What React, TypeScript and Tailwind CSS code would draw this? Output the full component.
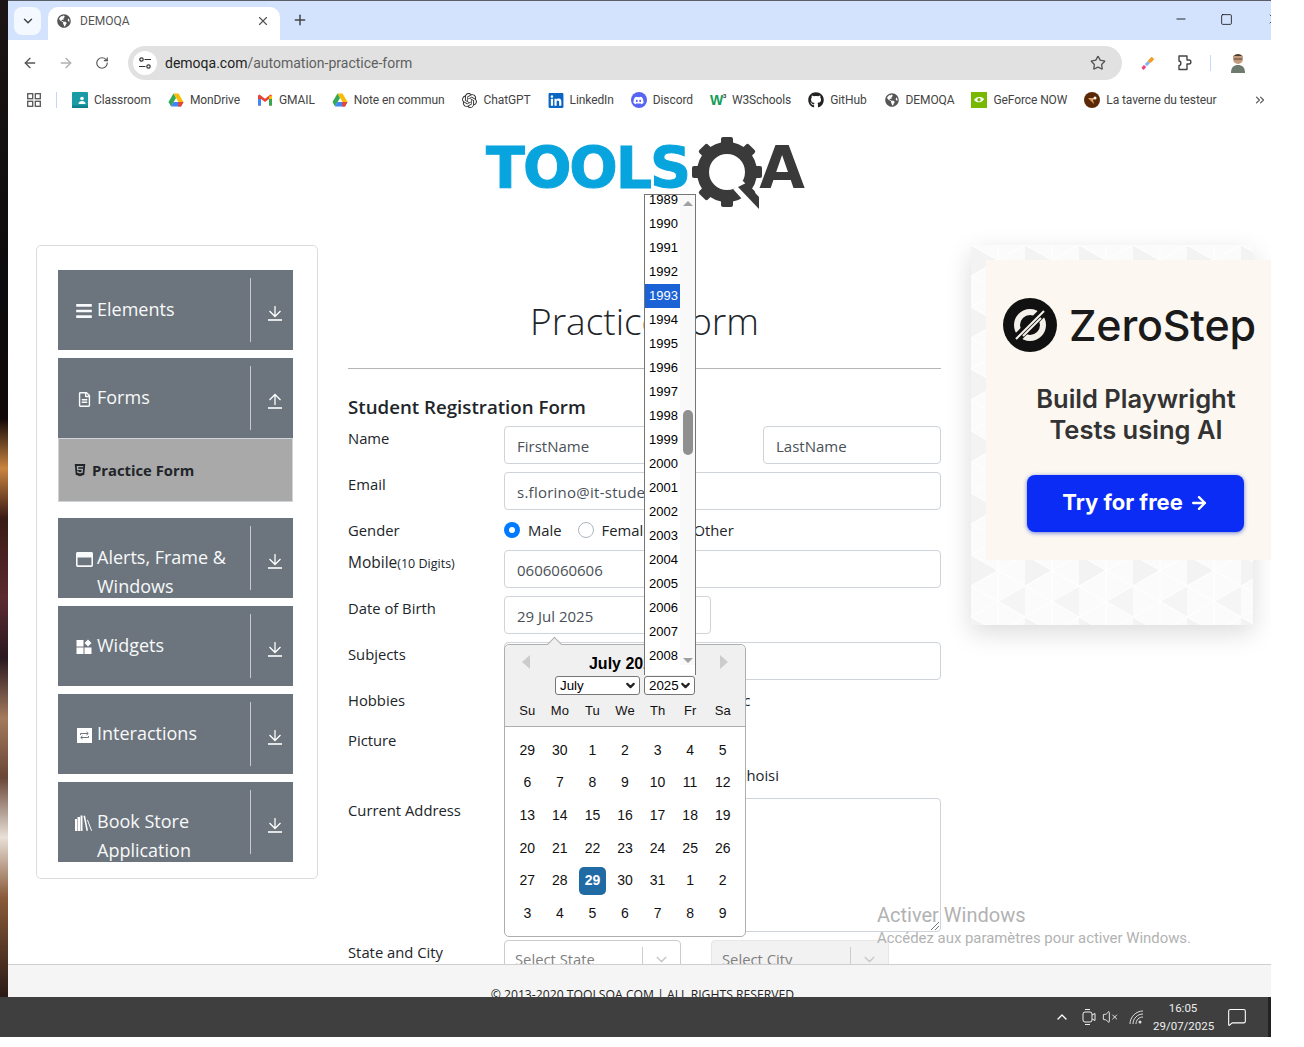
import React from "react";
import { ArrowLeft, ArrowRight, RotateCw, Star, ChevronDown, ChevronUp, X, Plus, Minus, Square, ChevronsRight, VolumeX, MessageSquare, ArrowRight as Arr } from "lucide-react";
import { FaGlobeAmericas, FaGithub, FaLinkedin, FaDiscord, FaHtml5, FaBars, FaRegWindowMaximize, FaRegFileAlt } from "react-icons/fa";
import { SiOpenai } from "react-icons/si";

const Drive = () => (
  <svg width="16" height="16" viewBox="0 0 16 16">
    <polygon points="5.5,1.5 10.5,1.5 15.5,10 10.5,10" fill="#fbbc04" />
    <polygon points="5.5,1.5 8,6 3,14.5 0.5,10" fill="#34a853" />
    <polygon points="5.5,10 15.5,10 13,14.5 3,14.5" fill="#4285f4" />
    <polygon points="10.5,10 15.5,10 13,14.5 10,14.5" fill="#ea4335" />
  </svg>
);
const Gmail = () => (
  <svg width="16" height="16" viewBox="0 0 16 16">
    <path d="M1 3.5V13.5H4V7L8 10L12 7V13.5H15V3.5L13.5 2.5L8 6.8L2.5 2.5Z" fill="#ea4335" />
    <rect x="1" y="7" width="3" height="6.5" fill="#4285f4" />
    <rect x="12" y="7" width="3" height="6.5" fill="#34a853" />
    <polygon points="12,4.5 15,3.5 15,7 12,7" fill="#fbbc04" />
  </svg>
);
const Classroom = () => (
  <svg width="16" height="16" viewBox="0 0 16 16">
    <rect width="16" height="16" rx="1" fill="#1a9aa5" />
    <circle cx="10" cy="6.5" r="1.8" fill="#fff" />
    <path d="M6.5 12c0-2 1.5-3 3.5-3s3.5 1 3.5 3z" fill="#fff" />
    <rect y="13.5" width="16" height="2.5" fill="#0f7f8a" />
  </svg>
);
const Geforce = () => (
  <svg width="16" height="16" viewBox="0 0 16 16">
    <rect width="16" height="16" fill="#76b900" />
    <path d="M3 8c2-3.5 7-4 10-1-2 4-7 4.500-10 1z" fill="#fff" />
    <circle cx="8" cy="7.800" r="1.700" fill="#76b900" />
  </svg>
);
const Taverne = () => (
  <svg width="16" height="16" viewBox="0 0 16 16">
    <circle cx="8" cy="8" r="8" fill="#5a2a08" />
    <path d="M4 6h8l-3 2 1 4-3-3z" fill="#e0a060" />
    <circle cx="11" cy="6" r="1.500" fill="#fff" />
  </svg>
);

const bookmarks: { n: string; i: React.ReactNode }[] = [
  { n: "Classroom", i: <Classroom /> },
  { n: "MonDrive", i: <Drive /> },
  { n: "GMAIL", i: <Gmail /> },
  { n: "Note en commun", i: <Drive /> },
  { n: "ChatGPT", i: <SiOpenai size={15} className="text-[#333]" /> },
  { n: "LinkedIn", i: <FaLinkedin size={17} className="text-[#0a66c2]" /> },
  { n: "Discord", i: <span className="w-4 h-4 rounded-full bg-[#5865f2] flex items-center justify-center"><FaDiscord size={11} className="text-white" /></span> },
  { n: "W3Schools", i: <span className="w-4 text-[14px] leading-none font-bold text-[#0f9d58] flex font-['Liberation_Sans',sans-serif]">W<span className="text-[6px] text-[#333]">3</span></span> },
  { n: "GitHub", i: <FaGithub size={16} className="text-[#222]" /> },
  { n: "DEMOQA", i: <FaGlobeAmericas size={14} className="text-[#555] mx-px" /> },
  { n: "GeForce NOW", i: <Geforce /> },
  { n: "La taverne du testeur", i: <Taverne /> },
];

const Arrow = ({ up }: { up?: boolean }) => (
  <svg width="16" height="16" viewBox="0 0 16 16" fill="none" stroke="#fff" strokeWidth="1.300">
    {up ? (
      <>
        <path d="M8 12V1.500M2.500 7L8 1.500L13.500 7" />
        <path d="M1 15H15" strokeWidth="1.600" />
      </>
    ) : (
      <>
        <path d="M8 1V11.500M2.500 6L8 11.500L13.500 6" />
        <path d="M1 15H15" strokeWidth="1.600" />
      </>
    )}
  </svg>
);

const WidgetIcon = () => (
  <svg width="16" height="16" viewBox="0 0 16 16" fill="#fff">
    <rect x="0.500" y="1" width="7" height="6.500" />
    <rect x="0.500" y="8.500" width="7" height="6.500" />
    <rect x="8.500" y="8.500" width="7" height="6.500" />
    <polygon points="12,0.500 15.500,4 12,7.500 8.500,4" />
  </svg>
);
const InteractIcon = () => (
  <svg width="15" height="15" viewBox="0 0 15 15">
    <rect width="15" height="15" fill="#fff" />
    <path d="M3.500 7V5.500H11M9.500 4L11.300 5.500L9.500 7M11.500 8V9.500H4M5.500 8L3.700 9.500L5.500 11" fill="none" stroke="#6c757d" strokeWidth="1" />
  </svg>
);
const BooksIcon = () => (
  <svg width="18" height="16" viewBox="0 0 18 16" fill="#fff">
    <rect x="0" y="4" width="2" height="12" />
    <rect x="2.500" y="2" width="2.500" height="14" />
    <rect x="5.500" y="0.500" width="2" height="15.500" />
    <polygon points="8.500,1 10,0.500 13,15.500 11.500,16" />
    <polygon points="12,5 12.800,4.800 17,15.500 16.200,16" />
  </svg>
);

const nav: { t: React.ReactNode; i: React.ReactNode; up?: boolean }[] = [
  { t: "Elements", i: <FaBars size={18} /> },
  { t: "Forms", i: <FaRegFileAlt size={15} />, up: true },
  { t: <>Alerts, Frame &amp; Windows</>, i: <FaRegWindowMaximize size={17} /> },
  { t: "Widgets", i: <WidgetIcon /> },
  { t: "Interactions", i: <InteractIcon /> },
  { t: <>Book Store Application</>, i: <BooksIcon /> },
];

const NavItem = ({ t, i, up }: { t: React.ReactNode; i: React.ReactNode; up?: boolean }) => (
  <div className="h-[80px] bg-[#6c757d] flex text-[#f8f9fa] overflow-hidden">
    <div className="w-[192px] flex items-start pl-[17px] pt-[25px] shrink-0">
      <span className="w-[18px] h-[30px] flex items-center justify-center shrink-0 mt-[1px]">{i}</span>
      <span className="text-[18px] leading-[29px] ml-[4px] w-[150px]">{t}</span>
    </div>
    <div className="flex-1 my-2 border-l border-[#c5c9cd] flex items-center justify-center pt-[5px] pl-[6px]">
      <Arrow up={up} />
    </div>
  </div>
);

const Field = ({ label, children, h }: { label: React.ReactNode; children?: React.ReactNode; h: string }) => (
  <div className={`flex mb-2 ${h}`}>
    <div className="w-[156px] shrink-0 leading-[24px] text-[#212529]">{label}</div>
    <div className="flex-1 min-w-0">{children}</div>
  </div>
);
const inputCls = "h-[38px] border border-[#ced4da] rounded-[4px] px-3 leading-[38px] text-[15px] text-[#495057] bg-white";

const years = Array.from({ length: 21 }, (_, k) => 1989 + k);
const weeks = [
  [29, 30, 1, 2, 3, 4, 5],
  [6, 7, 8, 9, 10, 11, 12],
  [13, 14, 15, 16, 17, 18, 19],
  [20, 21, 22, 23, 24, 25, 26],
  [27, 28, 29, 30, 31, 1, 2],
  [3, 4, 5, 6, 7, 8, 9],
];
const SelectChev = () => <ChevronDown size={13} strokeWidth={4} className="text-[#222]" />;

export default function App() {
  return (
    <div className="relative w-[1304px] h-[1047px] bg-white overflow-hidden font-['Open_Sans',sans-serif] text-[14.8px]">
      <div className="flex h-[997px] w-[1271px]">
        <div className="w-2 shrink-0 bg-[linear-gradient(180deg,#1c1414_0%,#0b0a0c_30%,#120808_42%,#c9843f_47%,#3a1a16_52%,#5c2a30_60%,#2a1820_66%,#a37a5c_72%,#6a4636_78%,#e8e0d8_84%,#8a5a3a_90%,#2a1a14_100%)]" />
        <div className="w-[1263px] flex flex-col overflow-hidden">
          {/* tab strip */}
          <div className="h-[40px] shrink-0 bg-[#d3e3fd] border-t border-[#5a5e66] flex items-end font-['Roboto',sans-serif]">
            <div className="ml-[6px] mb-[5px] w-[27px] h-[28px] rounded-lg bg-[#f4f8ff] flex items-center justify-center text-[#444]">
              <ChevronDown size={14} strokeWidth={2.500} />
            </div>
            <div className="ml-[7px] w-[232px] h-[33px] rounded-t-[10px] bg-white flex items-center pl-[9px] pr-[10px] pb-[6px] text-[12px] text-[#555]">
              <FaGlobeAmericas size={14} className="text-[#555]" />
              <span className="ml-[9px] flex-1">DEMOQA</span>
              <X size={14} className="text-[#555]" />
            </div>
            <div className="ml-[12px] mb-[12px] text-[#444]">
              <Plus size={16} strokeWidth={2.200} />
            </div>
            <div className="ml-auto flex items-center mb-[13px] text-[#111]">
              <Minus size={14} strokeWidth={1.500} />
              <Square size={13} strokeWidth={1.500} className="ml-[32px]" />
              <X size={16} strokeWidth={1} className="ml-[33px] -mr-[11px]" />
            </div>
          </div>
          {/* toolbar */}
          <div className="h-[44px] shrink-0 pt-[2px] bg-white flex items-center font-['Roboto',sans-serif]">
            <ArrowLeft size={16} className="ml-[14px] text-[#555]" />
            <ArrowRight size={16} className="ml-[20px] text-[#b0b0b0]" />
            <RotateCw size={14} className="ml-[21px] text-[#555]" />
            <div className="ml-[19px] w-[994px] h-[34px] rounded-full bg-[#e1e1e1] flex items-center pl-[5px] pr-[16px]">
              <span className="w-[24px] h-[24px] rounded-full bg-white flex items-center justify-center">
                <svg width="14" height="14" viewBox="0 0 14 14" fill="none" stroke="#333" strokeWidth="1.200">
                  <circle cx="3.500" cy="3.500" r="1.700" />
                  <path d="M6.500 3.500H13M1 10.500H7.500" />
                  <circle cx="10.500" cy="10.500" r="1.700" />
                </svg>
              </span>
              <span className="ml-[8px] text-[14px] text-[#222] flex-1">
                demoqa.com<span className="text-[#5f5f5f]">/automation-practice-form</span>
              </span>
              <Star size={16} className="text-[#555]" />
            </div>
            <svg width="16" height="16" viewBox="0 0 16 16" className="ml-[18px]">
              <path d="M4 12L7 9" stroke="#e8f0ff" strokeWidth="3" />
              <path d="M2.500 14L5 11" stroke="#f5417a" strokeWidth="3" />
              <path d="M6 10L9 7" stroke="#7fb3f5" strokeWidth="3" />
              <path d="M9 7L13 3" stroke="#f59a23" strokeWidth="3.500" />
            </svg>
            <svg width="18" height="18" viewBox="0 0 18 18" fill="none" stroke="#444" strokeWidth="1.400" strokeLinejoin="round" className="ml-[20px]">
              <path d="M3 2H11V6H13C15.500 6 15.500 10 13 10H11V15.500H3V11.500C5.500 11.500 5.500 7 3 7Z" />
            </svg>
            <div className="ml-[16px] w-px h-[16px] bg-[#c5d8f5]" />
            <svg width="18" height="24" viewBox="0 0 18 24" className="ml-[18px]">
              <circle cx="9" cy="8" r="5" fill="#c49a7a" />
              <path d="M4 7c0-5 10-5 10 0l-1-2H5z" fill="#4a3a2a" />
              <path d="M5 8H13" stroke="#333" strokeWidth="0.800" />
              <path d="M2 22c0-6 3-8 7-8s7 2 7 8z" fill="#6e7a6e" />
            </svg>
          </div>
          {/* bookmarks */}
          <div className="h-[36px] shrink-0 pb-[4px] bg-white flex items-center font-['Roboto',sans-serif] text-[12px] tracking-[-0.1px] text-[#444] relative">
            <svg width="14" height="14" viewBox="0 0 14 14" fill="none" stroke="#555" strokeWidth="1.300" className="ml-[19px]">
              <rect x="0.700" y="0.700" width="5" height="5" />
              <rect x="8.300" y="0.700" width="5" height="5" />
              <rect x="0.700" y="8.300" width="5" height="5" />
              <rect x="8.300" y="8.300" width="5" height="5" />
            </svg>
            <div className="ml-[15px] w-px h-[16px] bg-[#c5d8f5]" />
            <div className="ml-[15px] flex items-center gap-[17px] whitespace-nowrap">
              {bookmarks.map((b) => (
                <div key={b.n} className="flex items-center gap-[6px]">
                  <span className="w-4 h-4 flex items-center justify-center">{b.i}</span>
                  <span>{b.n}</span>
                </div>
              ))}
            </div>
            <ChevronsRight size={14} className="ml-auto mr-[4px] text-[#555]" />
          </div>
          {/* page */}
          <div className="flex-1 min-h-0 overflow-hidden bg-white">
            <div className="h-[125px] flex items-start pl-[478px]">
              <span className="mt-[16px] text-[57px] leading-[64px] font-bold font-['DejaVu_Sans',sans-serif] text-[#08a4de] tracking-[-2px] [-webkit-text-stroke:1px_#08a4de]">TOOLS</span>
              <svg width="70" height="74" viewBox="0 0 70 74" className="mt-[17px] ml-[3px]">
                <g fill="#3a3a3a">
                  {[0, 45, 90, 135, 180, 225, 270, 315].map((a) => (
                    <rect key={a} x="29" y="0" width="12" height="12" rx="2" transform={`rotate(${a} 35 35)`} />
                  ))}
                </g>
                <circle cx="35" cy="35" r="24" fill="none" stroke="#3a3a3a" strokeWidth="12" />
                <path d="M46 48L65 69" stroke="#fff" strokeWidth="13" />
                <path d="M46 50L67 72V60L54 46z" fill="#3a3a3a" />
              </svg>
              <span className="mt-[16px] -ml-[3px] text-[59px] leading-[64px] font-bold font-['DejaVu_Sans',sans-serif] text-[#3a3a3a]">A</span>
            </div>
            <div className="flex pl-[28px]">
              {/* sidebar */}
              <div className="w-[282px] h-[634px] shrink-0 border border-[#dcdcdc] rounded-[5px] pt-[24px] pl-[21px] pr-[24px]">
                <div className="flex flex-col gap-2">
                  <NavItem {...nav[0]} />
                  <div>
                    <NavItem {...nav[1]} />
                    <div className="h-[64px] bg-[#a9a9a9] border border-[#ced4da] flex items-center pl-[14px] text-[#212529] font-bold text-[14.8px]">
                      <FaHtml5 size={14} className="text-[#212529]" />
                      <span className="ml-[5px]">Practice Form</span>
                    </div>
                    <div className="h-[8px]" />
                  </div>
                  <NavItem {...nav[2]} />
                  <NavItem {...nav[3]} />
                  <NavItem {...nav[4]} />
                  <NavItem {...nav[5]} />
                </div>
              </div>
              {/* center */}
              <div className="ml-[30px] w-[593px] shrink-0 text-[#212529]">
                <h1 className="mt-[50px] h-[52px] leading-[52px] text-center text-[37px] font-light">Practice Form</h1>
                <div className="mt-[21px] h-px bg-[#b5b5b5]" />
                <h5 className="mt-[23px] h-[30px] leading-[30px] text-[18.7px] font-semibold mb-[4px]">Student Registration Form</h5>
                <Field label="Name" h="h-[38px]">
                  <div className="flex justify-between">
                    <div className={`${inputCls} w-[178px]`}>FirstName</div>
                    <div className={`${inputCls} w-[178px]`}>LastName</div>
                  </div>
                </Field>
                <Field label="Email" h="h-[38px]">
                  <div className={`${inputCls} tracking-[0.25px]`}>s.florino@it-students.fr</div>
                </Field>
                <Field label="Gender" h="h-[24px]">
                  <div className="flex items-center h-[24px]">
                    <span className="w-4 h-4 rounded-full bg-[#007bff] flex items-center justify-center"><span className="w-[6px] h-[6px] rounded-full bg-white" /></span>
                    <span className="ml-2">Male</span>
                    <span className="ml-[16px] w-4 h-4 rounded-full border border-[#adb5bd] bg-white" />
                    <span className="ml-2">Female</span>
                    <span className="ml-[42px]">Other</span>
                  </div>
                </Field>
                <Field label={<><span className="text-[15.5px]">Mobile</span><span className="text-[12.500px]">(10 Digits)</span></>} h="h-[38px]">
                  <div className={inputCls}>0606060606</div>
                </Field>
                <Field label="Date of Birth" h="h-[38px]">
                  <div className={`${inputCls} w-[207px]`}>29 Jul 2025</div>
                </Field>
                <Field label="Subjects" h="h-[38px]">
                  <div className={inputCls} />
                </Field>
                <Field label="Hobbies" h="h-[32px]">
                  <div className="pl-[206px] leading-[24px]">Music</div>
                </Field>
                <Field label="Picture" h="h-[62px]">
                  <div className="pl-[141px] pt-[35px] leading-[24px]">Aucun fichier choisi</div>
                </Field>
                <Field label="Current Address" h="h-[134px]">
                  <div className="relative h-[134px] border border-[#ced4da] rounded-[4px]">
                    <svg width="10" height="10" viewBox="0 0 10 10" className="absolute right-0 bottom-0" stroke="#777" strokeWidth="1">
                      <path d="M1 9L9 1M5 9L9 5" />
                    </svg>
                  </div>
                </Field>
                <Field label="State and City" h="h-[38px]">
                  <div className="flex gap-[30px] text-[#808080]">
                    <div className="w-[177px] h-[38px] border border-[#ccc] rounded-[4px] flex items-center pl-[10px]">
                      <span className="flex-1">Select State</span>
                      <span className="w-px h-[24px] bg-[#ccc]" />
                      <ChevronDown size={17} strokeWidth={2} className="mx-[10px] text-[#ccc]" />
                    </div>
                    <div className="w-[178px] h-[38px] border border-[#e6e6e6] bg-[#f2f2f2] rounded-[4px] flex items-center pl-[10px]">
                      <span className="flex-1">Select City</span>
                      <span className="w-px h-[24px] bg-[#ccc]" />
                      <ChevronDown size={17} strokeWidth={2} className="mx-[10px] text-[#ccc]" />
                    </div>
                  </div>
                </Field>
              </div>
              {/* ad */}
              <div className="ml-[30px] w-[282px] h-[380px] shrink-0 relative bg-[#fbfbfb] shadow-[0_8px_24px_rgba(0,0,0,0.14)]">
                <svg width="282" height="380" className="absolute inset-0">
                  <defs>
                    <pattern id="tri" width="54" height="62" patternUnits="userSpaceOnUse">
                      <polygon points="0,0 27,15 0,31" fill="#f3f3f3" />
                      <polygon points="54,31 27,46 54,62" fill="#f5f5f5" />
                      <path d="M0 0L54 31M54 0L0 31M0 31L54 62M54 31L0 62M27 0V62" stroke="#fff" strokeWidth="1" fill="none" />
                    </pattern>
                  </defs>
                  <rect width="282" height="380" fill="url(#tri)" />
                </svg>
                <div className="relative top-[15px] ml-[15px] w-[285px] h-[300px] bg-[#fcf7f1] font-['Inter',sans-serif] text-[#222]">
                  <div className="flex items-center pt-[38px] pl-[17px]">
                    <svg width="54" height="54" viewBox="0 0 54 54">
                      <circle cx="27" cy="27" r="27" fill="#111" />
                      <circle cx="27" cy="27" r="13" fill="none" stroke="#f4f0ea" strokeWidth="6" />
                      <path d="M12 42L42 12" stroke="#111" strokeWidth="9" />
                      <path d="M13 41L41 13M20 38L38 20" stroke="#f4f0ea" strokeWidth="2" />
                    </svg>
                    <span className="ml-[12px] text-[43px] leading-[54px] font-medium text-[#1a1a1a] tracking-[-0.200px]">ZeroStep</span>
                  </div>
                  <div className="mt-[31px] text-center text-[25.500px] leading-[31px] font-semibold text-[#333] pl-[15px]">
                    Build Playwright
                    <br />
                    Tests using AI
                  </div>
                  <div className="mt-[30px] ml-[41px] w-[217px] h-[57px] rounded-lg bg-[#0a2cf5] shadow-[0_1px_4px_rgba(10,40,200,0.6)] flex items-center justify-center text-white text-[22px] font-bold">
                    <span className="-mt-[2px] flex items-center">
                      Try for free
                      <Arr size={20} strokeWidth={2.800} className="ml-[6px]" />
                    </span>
                  </div>
                </div>
              </div>
            </div>
          </div>
          {/* footer */}
          <div className="h-[33px] shrink-0 overflow-hidden bg-[#f5f5f5] border-t border-[#cfcfcf] text-center pt-[21px] text-[12.200px] leading-[18px] text-[#222] pl-[9px]">
            © 2013-2020 TOOLSQA.COM | ALL RIGHTS RESERVED.
          </div>
        </div>
      </div>
      {/* taskbar */}
      <div className="h-[40px] w-[1271px] flex items-center bg-[#3f3f3f] border-r-[3px] border-[#222] text-white font-['Roboto',sans-serif]">
        <ChevronUp size={16} className="ml-auto" />
        <svg width="16" height="18" viewBox="0 0 16 18" fill="none" stroke="#eee" strokeWidth="1" className="ml-[11px]">
          <rect x="2" y="4" width="9" height="10" rx="2" />
          <path d="M11 7L14 5.500V12.500L11 11M4 1.500H9M4 16.500H9" />
        </svg>
        <VolumeX size={16} strokeWidth={1.300} className="ml-[5px]" />
        <svg width="15" height="15" viewBox="0 0 15 15" fill="none" stroke="#ddd" strokeWidth="1" className="ml-[11px]">
          <path d="M1 14C1 7 7 1 14 1M4 14C4 8.500 8.500 4 14 4M7 14C7 10 10 7 14 7" />
          <circle cx="11" cy="12" r="1.500" fill="#ddd" stroke="none" />
        </svg>
        <div className="ml-[9px] w-[60px] text-center text-[11.500px] leading-[18px] text-[#eee]">
          16:05
          <br />
          29/07/2025
        </div>
        <MessageSquare size={20} strokeWidth={1.300} className="ml-[14px] mr-[21px]" />
      </div>

      {/* calendar popup */}
      <div className="absolute left-[504px] top-[644px] w-[242px] h-[293px] border border-[#aeaeae] rounded-[5px] bg-white font-['Liberation_Sans',sans-serif] text-[14px] text-black">
        <div className="absolute -top-[6px] left-[44px] w-[11px] h-[11px] rotate-45 bg-[#f0f0f0] border-l border-t border-[#aeaeae]" />
        <div className="relative h-[82px] bg-[#f0f0f0] border-b border-[#aeaeae] rounded-t-[5px]">
          <div className="flex justify-between px-[17px] pt-[10px] h-[31px]">
            <span className="w-0 h-0 border-y-[7px] border-y-transparent border-r-[8px] border-r-[#ccc]" />
            <span className="font-bold text-[16px] leading-[18px]">July 2025</span>
            <span className="w-0 h-0 border-y-[7px] border-y-transparent border-l-[8px] border-l-[#ccc]" />
          </div>
          <div className="flex pl-[50px] gap-[4px]">
            <div className="w-[85px] h-[19px] bg-white border border-[#767676] rounded-[3px] flex items-center justify-between pl-[4px] pr-[2px] text-[13.330px]">July<SelectChev /></div>
            <div className="w-[51px] h-[19px] bg-white border border-[#767676] rounded-[3px] flex items-center justify-between pl-[4px] pr-[2px] text-[13.330px]">2025<SelectChev /></div>
          </div>
          <div className="grid grid-cols-7 px-[6px] mt-[7px] text-center text-[#111] text-[13px] leading-[18px]">
            {["Su", "Mo", "Tu", "We", "Th", "Fr", "Sa"].map((d) => <span key={d}>{d}</span>)}
          </div>
        </div>
        <div className="grid grid-cols-7 px-[6px] pt-[7px] text-center text-[#111]">
          {weeks.flat().map((d, k) => (
            <div key={k} className="h-[32.600px] flex items-center justify-center">
              {k === 30 ? (
                <span className="w-[27px] h-[28px] rounded-[5px] bg-[#216ba5] text-white font-bold flex items-center justify-center">{d}</span>
              ) : d}
            </div>
          ))}
        </div>
      </div>

      {/* year dropdown */}
      <div className="absolute left-[644px] top-[194px] w-[52px] h-[481px] border border-[#767676] border-b-0 bg-white overflow-hidden font-['Liberation_Sans',sans-serif] text-[13px] text-black">
        <div className="-mt-[7px] w-[35px]">
          {years.map((y) => (
            <div key={y} className={`h-[24px] leading-[24px] pl-[4px] ${y === 1993 ? "bg-[#1a62d6] text-white" : ""}`}>{y}</div>
          ))}
        </div>
        <div className="absolute right-0 top-0 bottom-[10px] w-[15px] bg-[#f9f9f9]">
          <span className="absolute left-[3px] top-[6px] w-0 h-0 border-x-[5px] border-x-transparent border-b-[5px] border-b-[#a0a0a0]" />
          <span className="absolute left-[3px] top-[215px] w-[10px] h-[45px] rounded-[5px] bg-[#8f8f8f]" />
          <span className="absolute left-[3px] bottom-[2px] w-0 h-0 border-x-[5px] border-x-transparent border-t-[5px] border-t-[#a0a0a0]" />
        </div>
      </div>

      {/* activation watermark */}
      <div className="absolute left-[877px] top-[902px] text-[#b2b2b2] font-['Roboto',sans-serif] pointer-events-none">
        <div className="text-[20px] leading-[27px]">Activer Windows</div>
        <div className="text-[14.900px] leading-[19px]">Accédez aux paramètres pour activer Windows.</div>
      </div>
    </div>
  );
}
